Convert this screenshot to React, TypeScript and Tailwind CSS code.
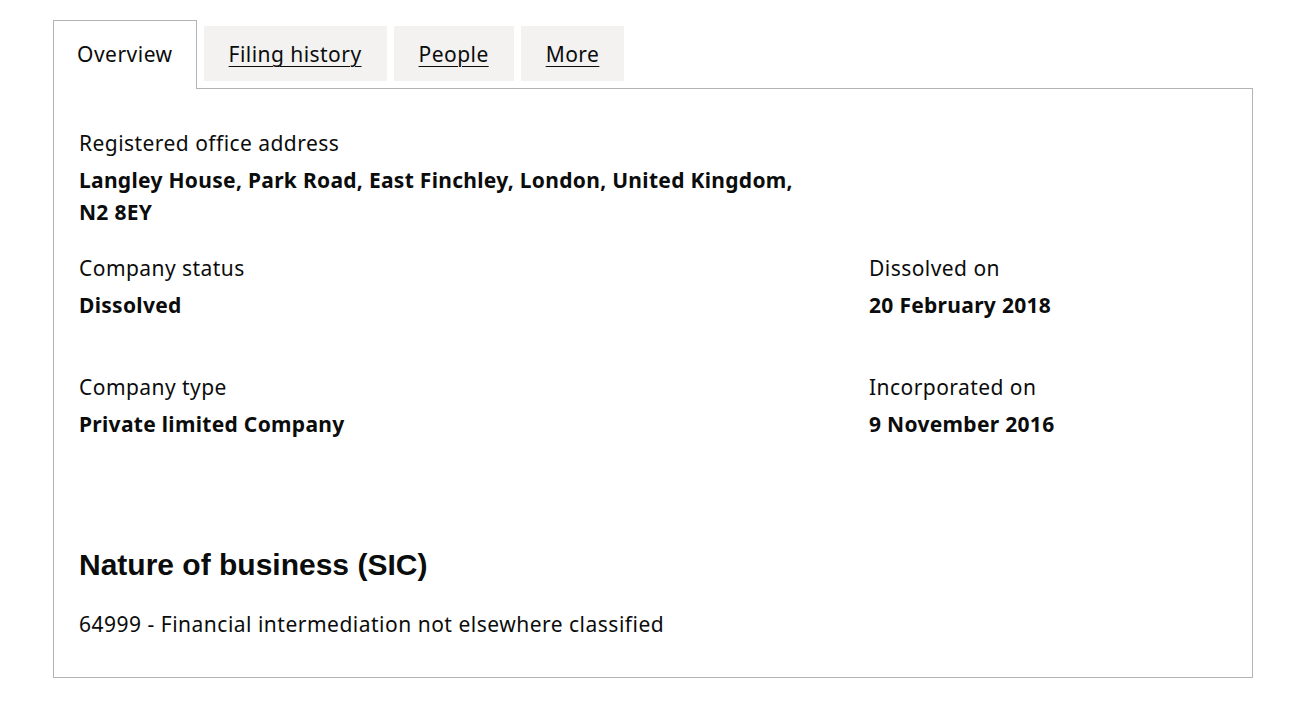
import React from "react";

const body = { fontFamily: '"Noto Sans", "Liberation Sans", sans-serif' };

function Field({ label, value, className = "" }: { label: string; value: React.ReactNode; className?: string }) {
  return (
    <div className={className}>
      <div className="text-[21px] leading-[25px] tracking-[0.45px] text-[#0b0c0c]">{label}</div>
      <div className="mt-[8px] text-[21px] leading-[32px] tracking-[0.3px] font-bold text-[#0b0c0c]">{value}</div>
    </div>
  );
}

const tab =
  "mt-[6px] h-[55px] bg-[#f3f2f1] px-[25px] pt-[3px] flex items-center text-[21px] tracking-[0.45px] text-[#0b0c0c] underline underline-offset-[4px] decoration-[1px]";

export default function App() {
  return (
    <div className="min-h-[717px] bg-white" style={body}>
      <div className="pl-[53px] pt-[20px] w-[1253px]">
        <div className="flex items-start gap-[7px] relative z-10 -mb-px">
          <div className="h-[69px] border border-b-0 border-[#b1b4b6] bg-white px-[23px] flex items-center text-[21px] tracking-[0.5px] text-[#0b0c0c]">
            Overview
          </div>
          <div className={tab}>Filing history</div>
          <div className={tab}>People</div>
          <div className={tab}>More</div>
        </div>
        <div className="border border-[#b1b4b6] px-[25px] pt-[42px] pb-[40px]">
          <Field
            label="Registered office address"
            value={
              <>
                Langley House, Park Road, East Finchley, London, United Kingdom,
                <br />
                N2 8EY
              </>
            }
          />
          <div className="flex mt-[28px]">
            <Field className="w-[790px]" label="Company status" value="Dissolved" />
            <Field label="Dissolved on" value="20 February 2018" />
          </div>
          <div className="flex mt-[54px]">
            <Field className="w-[790px]" label="Company type" value="Private limited Company" />
            <Field label="Incorporated on" value="9 November 2016" />
          </div>
          <h2
            className="mt-[107px] text-[30px] leading-[36px] font-bold text-[#0b0c0c]"
            style={{ fontFamily: '"Liberation Sans", Arial, sans-serif' }}
          >
            Nature of business (SIC)
          </h2>
          <div className="mt-[29px] text-[21px] leading-[25px] tracking-[0.5px] text-[#0b0c0c]">
            64999 - Financial intermediation not elsewhere classified
          </div>
        </div>
      </div>
    </div>
  );
}
